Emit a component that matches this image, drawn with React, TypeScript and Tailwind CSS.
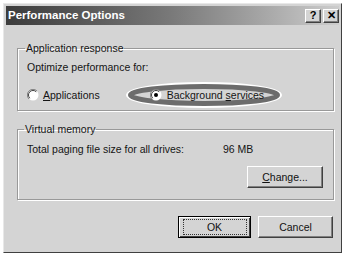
const font = { fontFamily: '"Liberation Sans", Arial, sans-serif' }

function TitleButton({ children }: { children: React.ReactNode }) {
  return (
    <div className="flex h-[14px] w-[16px] items-center justify-center border border-t-white border-l-white border-r-[#404040] border-b-[#404040] bg-[#d4d4d4] text-[11px] leading-none font-bold text-black shadow-[inset_-1px_-1px_0_#808080]">
      {children}
    </div>
  )
}

function Radio({ checked }: { checked?: boolean }) {
  return (
    <svg width="12" height="12" viewBox="0 0 12 12" className="relative shrink-0">
      <circle cx="6" cy="6" r="5.5" fill="#ffffff" />
      <path d="M10 2 A5.5 5.5 0 0 0 2 10" fill="none" stroke="#808080" strokeWidth="1" />
      <path d="M9.2 2.8 A4.5 4.5 0 0 0 2.8 9.2" fill="none" stroke="#404040" strokeWidth="1" />
      {checked && <circle cx="6" cy="6" r="2" fill="#000" />}
    </svg>
  )
}

function Button({ children, primary }: { children: React.ReactNode; primary?: boolean }) {
  return (
    <div
      className={
        'flex h-[22px] items-center justify-center bg-[#d4d4d4] text-[10.5px] text-[#111] ' +
        (primary
          ? 'border border-black shadow-[inset_1px_1px_0_#fff,inset_-1px_-1px_0_#404040]'
          : 'border border-t-white border-l-white border-r-[#404040] border-b-[#404040] shadow-[inset_-1px_-1px_0_#808080]')
      }
    >
      {primary ? (
        <span className="flex h-[16px] w-[64px] items-center justify-center border border-dotted border-[#333]">{children}</span>
      ) : (
        children
      )}
    </div>
  )
}

export default function App() {
  return (
    <div className="h-[254px] w-[345px] bg-white pt-[3px] pl-[3px]" style={font}>
      <div className="flex h-[250px] w-[339px] flex-col border border-t-[#e8e8e8] border-l-[#e8e8e8] border-r-[#404040] border-b-[#404040] bg-[#d4d4d4] p-[2px]">
        <div className="flex h-[19px] items-center bg-gradient-to-r from-[#3c3c3c] via-[#7a7a7a] to-[#cdcdcd] pl-[2px]">
          <span className="text-[11.5px] font-bold text-white">Performance Options</span>
          <div className="ml-auto flex gap-[2px]">
            <TitleButton>?</TitleButton>
            <TitleButton>✕</TitleButton>
          </div>
        </div>

        <div className="flex flex-col pl-[11px] text-[10.5px] leading-[14px] text-[#151515]">
          <fieldset className="mt-[16px] w-[317px] border border-[#999] px-[9px] pb-[8px] shadow-[1px_1px_0_#fff,inset_1px_1px_0_#fff]">
            <legend className="ml-[-2px] px-[1px]">Application response</legend>
            <div className="mt-[5px]">Optimize performance for:</div>
            <div className="relative mt-[14px] flex items-center">
              {/* hand-drawn highlight around the selected option */}
              <svg width="160" height="30" viewBox="0 0 160 30" className="absolute top-[-8px] left-[97px]">
                <ellipse cx="80" cy="15" rx="76.5" ry="11.5" fill="none" stroke="#ffffff" strokeWidth="3" />
                <ellipse cx="80" cy="15" rx="73.5" ry="8.5" fill="none" stroke="#6c6c6c" strokeWidth="5" />
              </svg>
              <Radio />
              <span className="relative ml-[4px]">
                <span className="underline">A</span>pplications
              </span>
              <div className="relative ml-[50px] flex items-center">
                <Radio checked />
                <span className="ml-[5px]">
                  Background <span className="underline">s</span>ervices
                </span>
              </div>
            </div>
          </fieldset>

          <fieldset className="mt-[11px] w-[317px] border border-[#999] px-[9px] pb-[11px] shadow-[1px_1px_0_#fff,inset_1px_1px_0_#fff]">
            <legend className="ml-[-3px] px-[1px]">Virtual memory</legend>
            <div className="mt-[6px] flex">
              <span className="w-[196px]">Total paging file size for all drives:</span>
              <span>96 MB</span>
            </div>
            <div className="mt-[10px] flex justify-end pr-[1px]">
              <div className="w-[76px]">
                <Button>
                  <span>
                    <span className="underline">C</span>hange...
                  </span>
                </Button>
              </div>
            </div>
          </fieldset>

          <div className="mt-[16px] flex w-[316px] justify-end gap-[7px]">
            <div className="w-[73px]">
              <Button primary>OK</Button>
            </div>
            <div className="w-[75px]">
              <Button>Cancel</Button>
            </div>
          </div>
        </div>
      </div>
    </div>
  )
}
